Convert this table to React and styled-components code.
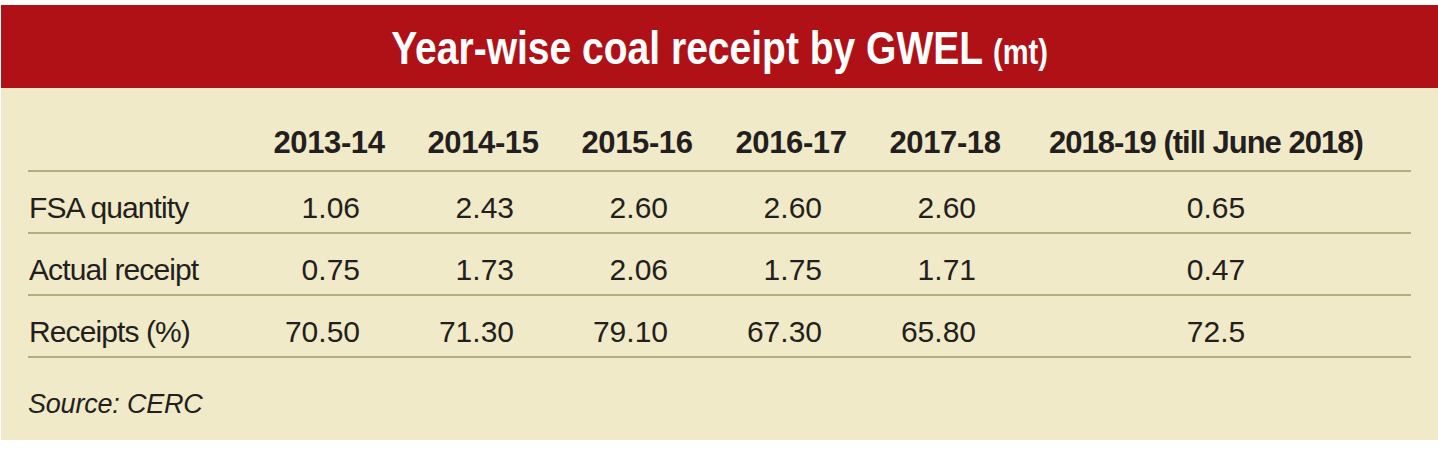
import React from 'react';
import styled, { createGlobalStyle } from 'styled-components';

const GlobalStyle = createGlobalStyle`
  html, body {
    margin: 0;
    padding: 0;
    background: #ffffff;
  }
  body {
    font-family: "Liberation Sans", Arial, sans-serif;
    color: #231f20;
  }
`;

const Page = styled.div`
  width: 1438px;
  padding: 5px 0 9px 1px;
  box-sizing: border-box;
`;

const TitleBar = styled.div`
  height: 83px;
  background: #b01117;
  display: flex;
  align-items: center;
  justify-content: center;
  color: #ffffff;
  padding-top: 2px;
  box-sizing: border-box;
`;

// no condensed face installed, so squeeze the bold sans
const Title = styled.h1`
  display: inline-block;
  margin: 0;
  font-family: "Liberation Sans", sans-serif;
  font-weight: 700;
  font-size: 47px;
  line-height: 1;
  white-space: nowrap;
  transform: scaleX(0.83);
  transform-origin: center;
`;

const Unit = styled.span`
  font-size: 35px;
  margin-left: 12px;
`;

const Panel = styled.div`
  height: 352px;
  background: #f0eac8;
  padding: 0 27px 0 27px;
  box-sizing: border-box;
`;

const cols = '224px repeat(5, 154px) 388px';

const HeadRow = styled.div`
  display: grid;
  grid-template-columns: ${cols};
  align-items: end;
  height: 84px;
  padding-bottom: 12px;
  box-sizing: border-box;
  border-bottom: 2px solid #b3ad80;
`;

const Row = styled.div`
  display: grid;
  grid-template-columns: ${cols};
  align-items: start;
  height: 62px;
  padding-top: 21px;
  box-sizing: border-box;
  border-bottom: 2px solid #b3ad80;
`;

const HeadCell = styled.div`
  font-weight: 700;
  font-size: 31px;
  line-height: 31px;
  letter-spacing: ${p => (p.$wide ? '-1px' : '-0.4px')};
  text-align: ${p => (p.$wide ? 'left' : 'center')};
  padding-left: ${p => (p.$wide ? '27px' : '0')};
  white-space: nowrap;
`;

const Label = styled.div`
  font-size: 30px;
  line-height: 30px;
  letter-spacing: -0.9px;
  padding-left: 1px;
  white-space: nowrap;
`;

const Value = styled.div`
  font-size: 30px;
  line-height: 30px;
  text-align: ${p => (p.$wide ? 'center' : 'right')};
  padding-right: ${p => (p.$wide ? '0' : '46px')};
`;

const Source = styled.div`
  margin-top: 33px;
  font-style: italic;
  font-size: 27px;
  line-height: 27px;
  letter-spacing: -0.2px;
`;

const years = ['2013-14', '2014-15', '2015-16', '2016-17', '2017-18', '2018-19 (till June 2018)'];

const rows = [
  { label: 'FSA quantity', values: ['1.06', '2.43', '2.60', '2.60', '2.60', '0.65'] },
  { label: 'Actual receipt', values: ['0.75', '1.73', '2.06', '1.75', '1.71', '0.47'] },
  { label: 'Receipts (%)', values: ['70.50', '71.30', '79.10', '67.30', '65.80', '72.5'] },
];

export default function App() {
  return (
    <Page>
      <GlobalStyle />
      <TitleBar>
        <Title>
          Year-wise coal receipt by GWEL<Unit>(mt)</Unit>
        </Title>
      </TitleBar>
      <Panel>
        <HeadRow>
          <div />
          {years.map((y, i) => (
            <HeadCell key={y} $wide={i === years.length - 1}>{y}</HeadCell>
          ))}
        </HeadRow>
        {rows.map(r => (
          <Row key={r.label}>
            <Label>{r.label}</Label>
            {r.values.map((v, i) => (
              <Value key={i} $wide={i === r.values.length - 1}>{v}</Value>
            ))}
          </Row>
        ))}
        <Source>Source: CERC</Source>
      </Panel>
    </Page>
  );
}
